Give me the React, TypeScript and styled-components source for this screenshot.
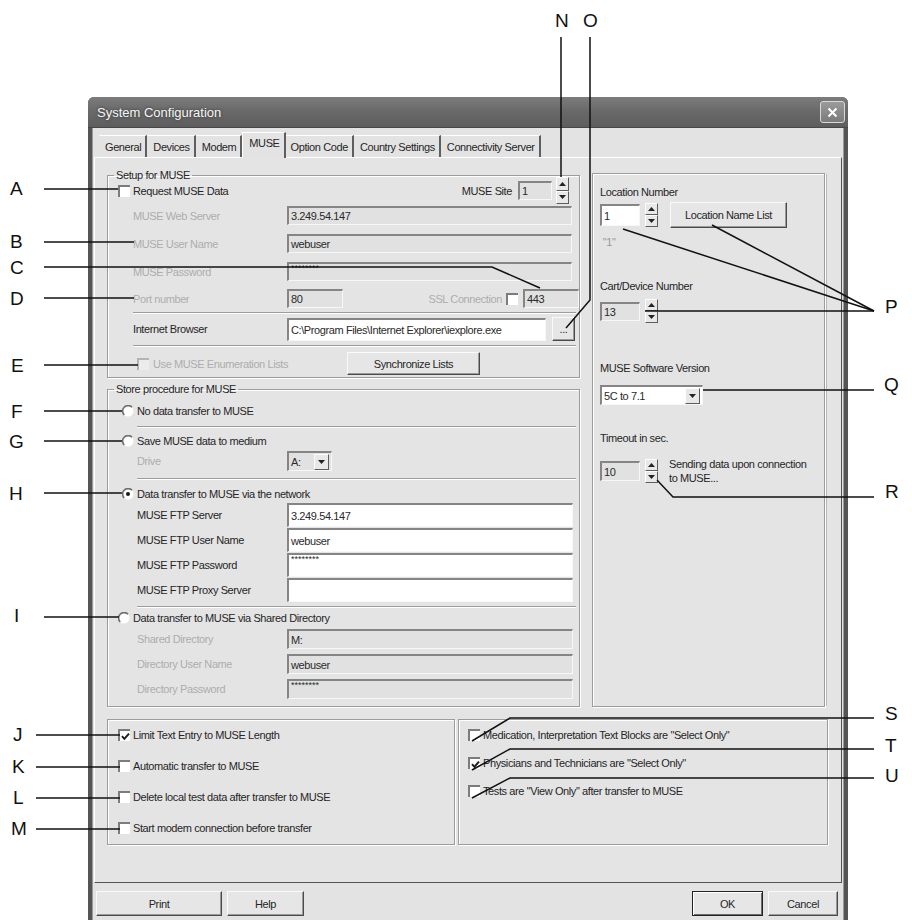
import React from 'react'
import styled, { createGlobalStyle } from 'styled-components'

const GlobalStyle = createGlobalStyle`
  html, body { margin: 0; padding: 0; background: #fff; }
  body {
    font-family: "Liberation Sans", Arial, sans-serif;
    font-size: 11px;
    letter-spacing: -0.4px;
    color: #262626;
  }
  * { box-sizing: border-box; }
`

// ---- page + window frame ----
const Page = styled.div`
  position: relative;
  width: 912px;
  height: 920px;
  overflow: hidden;
  padding: 97px 0 0 88px;
`

const Window = styled.div`
  width: 760px;
  height: 840px;
  background: #e3e3e3;
  border: 4px solid #555;
  border-top: none;
  border-radius: 6px 6px 0 0;
  box-shadow: inset 1px 0 0 #9a9a9a, inset -1px 0 0 #9a9a9a;
`

const TitleBar = styled.div`
  height: 31px;
  margin: 0 -4px;
  padding: 0 3px 0 9px;
  display: flex;
  align-items: center;
  justify-content: space-between;
  background: linear-gradient(180deg, #7c7c7c 0%, #6a6a6a 45%, #5d5d5d 100%);
  border-radius: 6px 6px 0 0;
  border-bottom: 1px solid #474747;
`

const Title = styled.span`
  font-size: 13px;
  letter-spacing: 0;
  color: #f6f6f6;
  text-shadow: 0 0 3px #333;
`

const CloseBtn = styled.div`
  width: 25px;
  height: 22px;
  display: flex;
  align-items: center;
  justify-content: center;
  background: linear-gradient(180deg, #9a9a9a, #7b7b7b);
  border: 1px solid #d8d8d8;
  border-radius: 3px;
`

const Body = styled.div`
  padding: 3px 2px 0 2px;
`

// ---- tabs ----
const TabStrip = styled.div`
  display: flex;
  align-items: flex-end;
  height: 26px;
  padding-left: 5px;
`

const Tab = styled.div<{ $active?: boolean }>`
  height: ${p => (p.$active ? 26 : 22)}px;
  padding: ${p => (p.$active ? '4px 4px 0 6px' : '5px 4px 0 5px')};
  margin: ${p => (p.$active ? '0 -1px -1px 0' : '0')};
  background: #e3e3e3;
  border-top: 1px solid #fff;
  border-left: 1px solid ${p => (p.$active ? '#fff' : 'transparent')};
  border-right: 2px solid #5e5e5e;
  white-space: nowrap;
  position: relative;
  z-index: ${p => (p.$active ? 2 : 1)};
`

const TabPage = styled.div`
  height: 726px;
  border: 1px solid;
  border-color: #fff #555 #555 #fff;
  background: #e4e4e4;
  padding: 11px 0 0 12px;
`

const TopArea = styled.div`
  display: flex;
  gap: 12px;
  align-items: flex-start;
`

const LeftCol = styled.div`
  width: 473px;
  display: flex;
  flex-direction: column;
  gap: 5px;
`

// ---- group boxes ----
const Group = styled.fieldset<{ $pb?: number }>`
  margin: 0;
  padding: 0 0 ${p => p.$pb ?? 0}px 0;
  min-width: 0;
  border: 1px solid #9c9c9c;
  box-shadow: 1px 1px 0 #fff, inset 1px 1px 0 #fff;
`

const Legend = styled.legend`
  margin-left: 6px;
  padding: 0 2px;
  height: 12px;
  line-height: 12px;
`

const Row = styled.div<{ $mt?: number; $h: number; $pl?: number; $pr?: number }>`
  display: flex;
  align-items: center;
  height: ${p => p.$h}px;
  margin-top: ${p => p.$mt ?? 0}px;
  padding-left: ${p => p.$pl ?? 25}px;
  padding-right: ${p => p.$pr ?? 0}px;
  white-space: nowrap;
`

const Spacer = styled.div`
  flex: 1;
`

const Label = styled.span<{ $disabled?: boolean; $w?: number }>`
  color: ${p => (p.$disabled ? '#adadad' : '#262626')};
  width: ${p => (p.$w ? `${p.$w}px` : 'auto')};
  flex-shrink: 0;
  white-space: nowrap;
`

const Sep = styled.div<{ $mt: number; $ml?: number }>`
  height: 2px;
  margin: ${p => p.$mt}px 3px 0 ${p => p.$ml ?? 25}px;
  border-top: 1px solid #9c9c9c;
  border-bottom: 1px solid #fff;
`

// ---- inputs ----
const Field = styled.div<{ $w: number; $h: number; $white?: boolean; $ml?: number }>`
  width: ${p => p.$w}px;
  height: ${p => p.$h}px;
  margin-left: ${p => p.$ml ?? 0}px;
  flex-shrink: 0;
  display: flex;
  align-items: center;
  padding: 0 2px;
  background: ${p => (p.$white ? '#fff' : '#e1e1e1')};
  border-style: solid;
  border-width: 2px 1px 1px 2px;
  border-color: #858585 #f7f7f7 #f7f7f7 #858585;
  color: #2a2a2a;
  overflow: hidden;
`

const Masked = styled.span`
  align-self: flex-start;
  font-size: 9px;
  letter-spacing: 0;
  line-height: 8px;
`

const Btn = styled.div<{ $w: number; $h: number; $ml?: number; $default?: boolean }>`
  width: ${p => p.$w}px;
  height: ${p => p.$h}px;
  margin-left: ${p => p.$ml ?? 0}px;
  flex-shrink: 0;
  display: flex;
  align-items: center;
  justify-content: center;
  background: #e6e6e6;
  border: 1px solid;
  border-color: ${p => (p.$default ? '#222' : '#fafafa #4a4a4a #4a4a4a #fafafa')};
  box-shadow: ${p =>
    p.$default
      ? 'inset 1px 1px 0 #fff, inset -1px -1px 0 #6a6a6a'
      : 'inset -1px -1px 0 #9a9a9a'};
  color: #262626;
`

const SpinWrap = styled.div<{ $h: number; $ml?: number }>`
  display: flex;
  flex-direction: column;
  width: 13px;
  height: ${p => p.$h}px;
  margin-left: ${p => p.$ml ?? 0}px;
  flex-shrink: 0;
`

const SpinBtn = styled.div`
  flex: 1;
  display: flex;
  align-items: center;
  justify-content: center;
  background: #e8e8e8;
  border: 1px solid;
  border-color: #fdfdfd #5c5c5c #5c5c5c #fdfdfd;
`

const Box = styled.div<{ $ml?: number; $mr?: number; $disabled?: boolean }>`
  width: 12px;
  height: 12px;
  flex-shrink: 0;
  margin-left: ${p => p.$ml ?? 0}px;
  margin-right: ${p => p.$mr ?? 3}px;
  display: flex;
  align-items: center;
  justify-content: center;
  background: ${p => (p.$disabled ? '#ececec' : '#fff')};
  border-style: solid;
  border-width: 2px 0 0 2px;
  border-color: ${p => (p.$disabled ? '#b4b4b4' : '#7c7c7c')};
`

const RadioWrap = styled.span`
  display: flex;
  width: 12px;
  height: 12px;
  margin-right: 3px;
  flex-shrink: 0;
`

// ---- right panel ----
const RightPanel = styled.div`
  width: 233px;
  height: 534px;
  margin-top: 4px;
  padding-left: 7px;
  border: 1px solid #9c9c9c;
  box-shadow: 1px 1px 0 #fff, inset 1px 1px 0 #fff, 3px 0 0 -1px #b8b8b8;
  display: flex;
  flex-direction: column;
`

const PanelText = styled.div<{ $mt: number; $disabled?: boolean }>`
  margin-top: ${p => p.$mt}px;
  height: 14px;
  line-height: 14px;
  color: ${p => (p.$disabled ? '#9a9a9a' : '#262626')};
  white-space: nowrap;
`

const PanelRow = styled.div<{ $mt: number; $h: number }>`
  display: flex;
  align-items: center;
  margin-top: ${p => p.$mt}px;
  height: ${p => p.$h}px;
`

const Note = styled.div`
  margin-left: 11px;
  line-height: 14px;
`

// ---- bottom ----
const BottomArea = styled.div`
  display: flex;
  gap: 3px;
  margin-top: 12px;
`

const OptBox = styled.div<{ $w: number; $gap: number }>`
  width: ${p => p.$w}px;
  height: 126px;
  padding-top: 7px;
  border: 1px solid #9c9c9c;
  box-shadow: 1px 1px 0 #fff, inset 1px 1px 0 #fff;
  display: flex;
  flex-direction: column;
  gap: ${p => p.$gap}px;
`

const ButtonBar = styled.div`
  display: flex;
  align-items: center;
  margin-top: 8px;
  padding-left: 2px;
`

// ---- small drawings ----
const Tri = ({ up }: { up?: boolean }) => (
  <svg width="7" height="4" viewBox="0 0 7 4">
    <path d={up ? 'M0 4 L3.5 0 L7 4 Z' : 'M0 0 L3.5 4 L7 0 Z'} fill="#222" />
  </svg>
)

const Spinner = ({ h, ml }: { h: number; ml?: number }) => (
  <SpinWrap $h={h} $ml={ml}>
    <SpinBtn><Tri up /></SpinBtn>
    <SpinBtn><Tri /></SpinBtn>
  </SpinWrap>
)

const Check = ({ on, disabled, ml, mr }: { on?: boolean; disabled?: boolean; ml?: number; mr?: number }) => (
  <Box $ml={ml} $mr={mr} $disabled={disabled}>
    {on && (
      <svg width="9" height="9" viewBox="0 0 9 9">
        <path d="M1 4.2 L3.4 6.8 L8 1.6" stroke="#1a1a1a" strokeWidth="1.9" fill="none" />
      </svg>
    )}
  </Box>
)

const Radio = ({ on }: { on?: boolean }) => (
  <RadioWrap>
    <svg width="12" height="12" viewBox="0 0 12 12">
      <circle cx="6" cy="6" r="5.5" fill="#fff" />
      <path d="M10 2.2 A5 5 0 0 0 2.2 10" stroke="#6e6e6e" strokeWidth="1.6" fill="none" />
      {on && <circle cx="6" cy="6" r="2" fill="#1a1a1a" />}
    </svg>
  </RadioWrap>
)

const ComboText = styled.span`
  flex: 1;
`

const Combo = ({ w, h, text, white }: { w: number; h: number; text: string; white?: boolean }) => (
  <Field $w={w} $h={h} $white={white}>
    <ComboText>{text}</ComboText>
    <SpinBtn style={{ flex: 'none', width: 15, height: h - 4 }}>
      <Tri />
    </SpinBtn>
  </Field>
)

// ---- annotations ----
const Overlay = styled.svg`
  position: absolute;
  left: 0;
  top: 0;
  pointer-events: none;
  font-family: "Liberation Sans", Arial, sans-serif;
  letter-spacing: 0;
`

type Tag = { t: string; x: number; y: number; lines: string[] }

const TAGS: Tag[] = [
  { t: 'A', x: 10, y: 188, lines: ['44,189 118,189'] },
  { t: 'B', x: 10, y: 241, lines: ['44,242 134,242'] },
  { t: 'C', x: 10, y: 267, lines: ['44,267 492,267 540,288'] },
  { t: 'D', x: 10, y: 298, lines: ['44,298 134,298'] },
  { t: 'E', x: 11, y: 365, lines: ['44,365 138,365'] },
  { t: 'F', x: 11, y: 411, lines: ['44,411 122,411'] },
  { t: 'G', x: 9, y: 441, lines: ['44,441 122,441'] },
  { t: 'H', x: 9, y: 493, lines: ['44,493 122,493'] },
  { t: 'I', x: 14, y: 615, lines: ['44,617 119,617'] },
  { t: 'J', x: 13, y: 734, lines: ['36,735 120,735'] },
  { t: 'K', x: 12, y: 766, lines: ['36,767 120,767'] },
  { t: 'L', x: 13, y: 797, lines: ['36,798 120,798'] },
  { t: 'M', x: 11, y: 828, lines: ['36,829 120,829'] },
  { t: 'N', x: 555, y: 20, lines: ['561,37 561,177'] },
  { t: 'O', x: 583, y: 20, lines: ['590,37 590,300 566,328'] },
  { t: 'P', x: 885, y: 306, lines: ['645,311 874,311', '623,229 874,311', '712,225 874,311'] },
  { t: 'Q', x: 884, y: 384, lines: ['703,390 874,390'] },
  { t: 'R', x: 885, y: 491, lines: ['657,480 673,497 874,497'] },
  { t: 'S', x: 885, y: 713, lines: ['472,741 510,718 874,718'] },
  { t: 'T', x: 885, y: 745, lines: ['472,770 510,749 874,749'] },
  { t: 'U', x: 885, y: 775, lines: ['472,798 510,778 874,778'] },
]

const Callouts = () => (
  <Overlay width="912" height="920" viewBox="0 0 912 920">
    {TAGS.map(tag => (
      <g key={tag.t}>
        <text x={tag.x} y={tag.y + 7} fontSize="19" fill="#111">{tag.t}</text>
        {tag.lines.map(pts => (
          <polyline key={pts} points={pts} stroke="#111" strokeWidth="1.5" fill="none" />
        ))}
      </g>
    ))}
  </Overlay>
)

const TABS = ['General', 'Devices', 'Modem', 'MUSE', 'Option Code', 'Country Settings', 'Connectivity Server']

export default function App() {
  return (
    <Page>
      <GlobalStyle />
      <Window>
        <TitleBar>
          <Title>System Configuration</Title>
          <CloseBtn>
            <svg width="11" height="11" viewBox="0 0 11 11">
              <path d="M1.5 1.5 L9.5 9.5 M9.5 1.5 L1.5 9.5" stroke="#fff" strokeWidth="2" />
            </svg>
          </CloseBtn>
        </TitleBar>

        <Body>
          <TabStrip>
            {TABS.map(t => (
              <Tab key={t} $active={t === 'MUSE'}>{t}</Tab>
            ))}
          </TabStrip>

          <TabPage>
            <TopArea>
              <LeftCol>
                {/* Setup for MUSE */}
                <Group $pb={2}>
                  <Legend>Setup for MUSE</Legend>
                  <Row $mt={-4} $h={27} $pl={10} $pr={10}>
                    <Check />
                    <Label>Request MUSE Data</Label>
                    <Spacer />
                    <Label>MUSE Site</Label>
                    <Field $w={34} $h={19} $ml={6}>1</Field>
                    <Spinner h={27} ml={4} />
                  </Row>
                  <Row $mt={2} $h={19}>
                    <Label $disabled $w={154}>MUSE Web Server</Label>
                    <Field $w={285} $h={19}>3.249.54.147</Field>
                  </Row>
                  <Row $mt={9} $h={19}>
                    <Label $disabled $w={154}>MUSE User Name</Label>
                    <Field $w={285} $h={19}>webuser</Field>
                  </Row>
                  <Row $mt={9} $h={19}>
                    <Label $disabled $w={154}>MUSE Password</Label>
                    <Field $w={285} $h={19}><Masked>********</Masked></Field>
                  </Row>
                  <Row $mt={8} $h={19}>
                    <Label $disabled $w={154}>Port number</Label>
                    <Field $w={56} $h={19}>80</Field>
                    <Spacer />
                    <Label $disabled>SSL Connection</Label>
                    <Check ml={4} mr={5} />
                    <Field $w={56} $h={19}>443</Field>
                  </Row>
                  <Sep $mt={4} />
                  <Row $mt={3} $h={24}>
                    <Label $w={154}>Internet Browser</Label>
                    <Field $w={259} $h={23} $white>C:\Program Files\Internet Explorer\iexplore.exe</Field>
                    <Btn $w={23} $h={24} $ml={6}>...</Btn>
                  </Row>
                  <Sep $mt={4} />
                  <Row $mt={5} $h={23} $pl={29}>
                    <Check disabled mr={4} />
                    <Label $disabled $w={194}>Use MUSE Enumeration Lists</Label>
                    <Btn $w={133} $h={23}>Synchronize Lists</Btn>
                  </Row>
                </Group>

                {/* Store procedure for MUSE */}
                <Group $pb={7}>
                  <Legend>Store procedure for MUSE</Legend>
                  <Row $mt={6} $h={20} $pl={14}>
                    <Radio />
                    <Label>No data transfer to MUSE</Label>
                  </Row>
                  <Sep $mt={5} $ml={29} />
                  <Row $mt={3} $h={20} $pl={14}>
                    <Radio />
                    <Label>Save MUSE data to medium</Label>
                  </Row>
                  <Row $h={20} $pl={29}>
                    <Label $disabled $w={150}>Drive</Label>
                    <Combo w={45} h={20} text="A:" />
                  </Row>
                  <Sep $mt={7} $ml={29} />
                  <Row $mt={5} $h={18} $pl={14}>
                    <Radio on />
                    <Label>Data transfer to MUSE via the network</Label>
                  </Row>
                  <Row $h={24} $pl={29}>
                    <Label $w={150}>MUSE FTP Server</Label>
                    <Field $w={286} $h={24} $white>3.249.54.147</Field>
                  </Row>
                  <Row $mt={1} $h={24} $pl={29}>
                    <Label $w={150}>MUSE FTP User Name</Label>
                    <Field $w={286} $h={24} $white>webuser</Field>
                  </Row>
                  <Row $mt={1} $h={24} $pl={29}>
                    <Label $w={150}>MUSE FTP Password</Label>
                    <Field $w={286} $h={24} $white><Masked>********</Masked></Field>
                  </Row>
                  <Row $mt={1} $h={24} $pl={29}>
                    <Label $w={150}>MUSE FTP Proxy Server</Label>
                    <Field $w={286} $h={24} $white />
                  </Row>
                  <Sep $mt={4} $ml={29} />
                  <Row $mt={1} $h={18} $pl={10}>
                    <Radio />
                    <Label>Data transfer to MUSE via Shared Directory</Label>
                  </Row>
                  <Row $mt={2} $h={20} $pl={29}>
                    <Label $disabled $w={150}>Shared Directory</Label>
                    <Field $w={286} $h={20}>M:</Field>
                  </Row>
                  <Row $mt={5} $h={20} $pl={29}>
                    <Label $disabled $w={150}>Directory User Name</Label>
                    <Field $w={286} $h={20}>webuser</Field>
                  </Row>
                  <Row $mt={5} $h={20} $pl={29}>
                    <Label $disabled $w={150}>Directory Password</Label>
                    <Field $w={286} $h={20}><Masked>********</Masked></Field>
                  </Row>
                </Group>
              </LeftCol>

              {/* right panel */}
              <RightPanel>
                <PanelText $mt={11}>Location Number</PanelText>
                <PanelRow $mt={2} $h={28}>
                  <Field $w={40} $h={22} $white>1</Field>
                  <Spinner h={24} ml={5} />
                  <Btn $w={117} $h={26} $ml={12}>Location Name List</Btn>
                </PanelRow>
                <PanelText $mt={6} $disabled>&nbsp;"1"</PanelText>
                <PanelText $mt={30}>Cart/Device Number</PanelText>
                <PanelRow $mt={5} $h={26}>
                  <Field $w={40} $h={19}>13</Field>
                  <Spinner h={24} ml={5} />
                </PanelRow>
                <PanelText $mt={37}>MUSE Software Version</PanelText>
                <PanelRow $mt={10} $h={20}>
                  <Combo w={103} h={20} text="5C to 7.1" white />
                </PanelRow>
                <PanelText $mt={26}>Timeout in sec.</PanelText>
                <PanelRow $mt={12} $h={28}>
                  <Field $w={40} $h={20}>10</Field>
                  <Spinner h={24} ml={5} />
                  <Note>Sending data upon connection<br />to MUSE...</Note>
                </PanelRow>
              </RightPanel>
            </TopArea>

            <BottomArea>
              <OptBox $w={348} $gap={15}>
                <Row $h={16} $pl={10}><Check on /><Label>Limit Text Entry to MUSE Length</Label></Row>
                <Row $h={16} $pl={10}><Check /><Label>Automatic transfer to MUSE</Label></Row>
                <Row $h={16} $pl={10}><Check /><Label>Delete local test data after transfer to MUSE</Label></Row>
                <Row $h={16} $pl={10}><Check /><Label>Start modem connection before transfer</Label></Row>
              </OptBox>
              <OptBox $w={370} $gap={12}>
                <Row $h={16} $pl={9}><Check /><Label>Medication, Interpretation Text Blocks are "Select Only"</Label></Row>
                <Row $h={16} $pl={9}><Check on /><Label>Physicians and Technicians are "Select Only"</Label></Row>
                <Row $h={16} $pl={9}><Check /><Label>Tests are "View Only" after transfer to MUSE</Label></Row>
              </OptBox>
            </BottomArea>
          </TabPage>

          <ButtonBar>
            <Btn $w={126} $h={25}>Print</Btn>
            <Btn $w={77} $h={25} $ml={5}>Help</Btn>
            <Spacer />
            <Btn $w={71} $h={25} $default>OK</Btn>
            <Btn $w={70} $h={25} $ml={5}>Cancel</Btn>
            <Spacer style={{ flex: 'none', width: 4 }} />
          </ButtonBar>
        </Body>
      </Window>
      <Callouts />
    </Page>
  )
}
